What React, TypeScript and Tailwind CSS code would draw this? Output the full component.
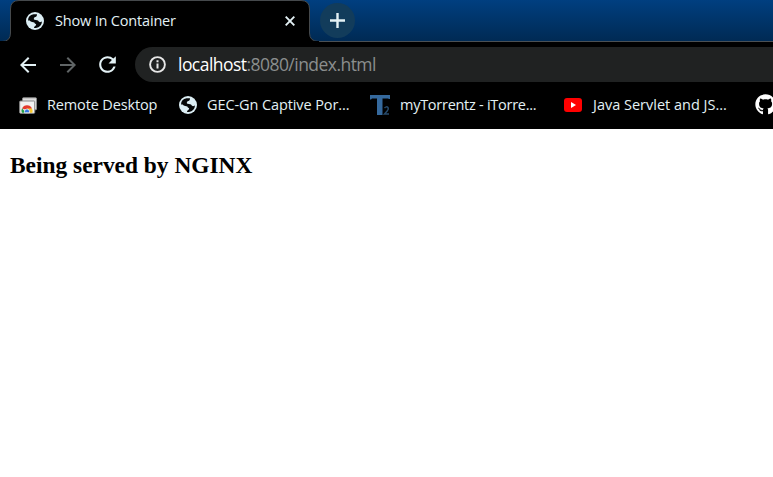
import { MdArrowBack, MdArrowForward, MdRefresh } from "react-icons/md";
import { FaGithub } from "react-icons/fa";

function Globe() {
  return (
    <svg viewBox="0 0 18 18" className="size-[18px] shrink-0">
      <circle cx="9" cy="9" r="9" fill="#dceef4" />
      <path d="M11 2.2 10.8 3.8Q10.500 5.200 8.500 5.300L7.700 6.900Q8 8 10 8L12 8.600Q12.500 10 14 10.200L16 9.500Q15.600 14.800 10 16L8 15.900Q7.800 14.500 9.600 13.800L10.200 12.200Q8.500 11.800 8.300 10.600L6.200 10.100Q4.500 9.600 3.700 8.600L2 8.500Q2.200 3 7.500 2.200Z" fill="#050708" />
    </svg>
  );
}

function RemoteDesktop() {
  return (
    <svg viewBox="0 0 18 17" className="h-[17px] w-[18px] shrink-0">
      <rect x="3.5" y=".8" width="14" height="12" rx=".8" fill="#ddd" stroke="#888" />
      <rect x=".7" y="4" width="15" height="12.3" rx=".8" fill="#f2f2f2" stroke="#888" />
      <path d="M3 11.500A5.400 5.400 0 0 1 13 11.500L8 13Z" fill="#e33b2e" />
      <path d="M3 11.300 7 15.800H3A5.400 5.400 0 0 1 3 11.300Z" fill="#24a148" />
      <path d="M8 11.500H13A5.400 5.400 0 0 1 13.200 15.800H8Z" fill="#f7c82e" />
      <path d="M5.500 15.800V14.500A2.500 2.500 0 0 1 10.500 14.500V15.800Z" fill="#3478e5" stroke="#fff" strokeWidth=".7" />
    </svg>
  );
}

export default function App() {
  return (
    <div className="h-[477px] w-[773px] overflow-hidden bg-white font-['Open_Sans',sans-serif] text-[#e3f1f5]">
      <header className="h-[129px] bg-black">
        <div className="flex h-[42px] border-b border-[#4b5054] bg-linear-to-b from-[#003f80] to-[#002a54]">
          <svg viewBox="0 0 320 42" className="-mr-[320px] h-[42px] w-[320px] shrink-0">
            <path d="M0 42V41.5H2Q10.500 41.5 10.500 33V9Q10.500 .5 19 .5H301Q309.500 .5 309.500 9V33Q309.500 41.500 319 41.500V42Z" fill="#000" stroke="#45494c" />
            <path d="M0 41.500h319" stroke="#000" strokeWidth="1" />
          </svg>
          <div className="z-10 flex h-[42px] w-[310px] shrink-0 items-center pr-[15px] pl-[26px]">
            <Globe />
            <span className="ml-[11px] text-[14.5px] tracking-[-0.18px] whitespace-nowrap">Show In Container</span>
            <svg viewBox="0 0 10 10" className="ml-auto size-[10px]"><path d="m.7.7 8.600 8.600M9.300.7.7 9.300" stroke="currentColor" strokeWidth="1.900" /></svg>
          </div>
          <div className="z-10 mt-[3px] ml-[10px] flex size-[35px] items-center justify-center rounded-full bg-[#123c5b]">
            <svg viewBox="0 0 15 15" className="size-[15px]"><path d="M7.500 0v15M0 7.500h15" stroke="currentColor" strokeWidth="2.400" /></svg>
          </div>
        </div>
        <div className="flex h-[44px] items-center pt-[1px] pl-[16px]">
          <MdArrowBack className="size-[24px]" />
          <MdArrowForward className="ml-[16px] size-[24px] text-[#606566]" />
          <MdRefresh className="ml-[15px] size-[25px]" />
          <div className="ml-[15px] flex h-[35px] flex-1 items-center rounded-l-full bg-[#202222] pl-[14px]">
            <svg viewBox="0 0 17 17" className="size-[17px] text-[#e7e7e7]">
              <circle cx="8.500" cy="8.500" r="7.400" fill="none" stroke="currentColor" strokeWidth="1.900" />
              <path d="M8.500 7.500v5M8.500 4.200v2" stroke="currentColor" strokeWidth="2" />
            </svg>
            <span className="mt-[-1px] ml-[12px] text-[17.5px] tracking-[-0.54px] whitespace-nowrap text-[#8b8e8e]"><span className="text-white">localhost</span>:8080/index.html</span>
          </div>
        </div>
        <nav className="flex h-[38px] items-center pl-[19px] text-[14.5px] whitespace-nowrap">
          <div className="flex w-[160px] shrink-0 items-center gap-[10px]"><RemoteDesktop /><span className="tracking-[-0.14px]">Remote Desktop</span></div>
          <div className="flex w-[191px] shrink-0 items-center gap-[10px]"><Globe /><span className="tracking-[-0.1px]">GEC-Gn Captive Por...</span></div>
          <div className="flex w-[194px] shrink-0 items-center gap-[10px]">
            <svg viewBox="0 0 20 20" className="size-5 shrink-0"><path d="M0 0H20V4H19L18 3.500H12.500V20H7V3.500H2L1 4.500H0Z" fill="#35699d" /><path d="M14.500 13q2-2 3.500-.5 1 1.500-.8 3.500L14.500 19H19" fill="none" stroke="#274b6c" strokeWidth="1.500" /></svg>
            <span className="tracking-[-0.27px]">myTorrentz - iTorre...</span>
          </div>
          <div className="flex w-[191px] shrink-0 items-center gap-[11px]">
            <svg viewBox="0 0 18 14" className="h-[14px] w-[18px] shrink-0"><rect width="18" height="14" rx="3" fill="red" /><path d="M7 4v6l5-3Z" fill="white" /></svg>
            <span>Java Servlet and JS...</span>
          </div>
          <FaGithub className="-mt-px size-[21px] shrink-0 text-white" />
        </nav>
      </header>
      <main className="px-[10px] pt-[22px] font-['Liberation_Serif',serif] text-black">
        <h3 className="text-[23.4px] leading-[29px] font-bold"><span>Being served by NGINX</span></h3>
      </main>
    </div>
  );
}
